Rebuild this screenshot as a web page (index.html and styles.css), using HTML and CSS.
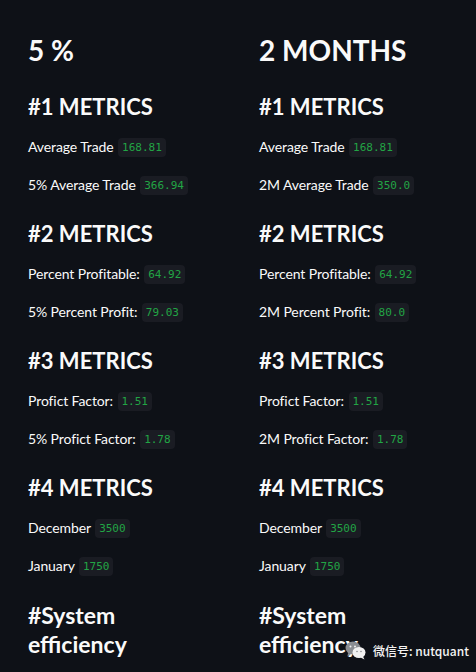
FILE: index.html
```html
<!DOCTYPE html>
<html>
<head>
<meta charset="utf-8">
<link rel="stylesheet" href="styles.css">
</head>
<body>
<div class="page">
  <div class="col">
    <h1 class="title">5 %</h1>
    <h2 class="sec">#1 METRICS</h2>
    <p class="row">Average Trade <code class="val">168.81</code></p>
    <p class="row">5% Average Trade <code class="val">366.94</code></p>
    <h2 class="sec">#2 METRICS</h2>
    <p class="row">Percent Profitable: <code class="val">64.92</code></p>
    <p class="row">5% Percent Profit: <code class="val">79.03</code></p>
    <h2 class="sec">#3 METRICS</h2>
    <p class="row">Profict Factor: <code class="val">1.51</code></p>
    <p class="row">5% Profict Factor: <code class="val">1.78</code></p>
    <h2 class="sec">#4 METRICS</h2>
    <p class="row">December <code class="val">3500</code></p>
    <p class="row">January <code class="val">1750</code></p>
    <h2 class="sec sys">#System efficiency</h2>
  </div>
  <div class="col">
    <h1 class="title">2 MONTHS</h1>
    <h2 class="sec">#1 METRICS</h2>
    <p class="row">Average Trade <code class="val">168.81</code></p>
    <p class="row">2M Average Trade <code class="val">350.0</code></p>
    <h2 class="sec">#2 METRICS</h2>
    <p class="row">Percent Profitable: <code class="val">64.92</code></p>
    <p class="row">2M Percent Profit: <code class="val">80.0</code></p>
    <h2 class="sec">#3 METRICS</h2>
    <p class="row">Profict Factor: <code class="val">1.51</code></p>
    <p class="row">2M Profict Factor: <code class="val">1.78</code></p>
    <h2 class="sec">#4 METRICS</h2>
    <p class="row">December <code class="val">3500</code></p>
    <p class="row">January <code class="val">1750</code></p>
    <h2 class="sec sys">#System efficiency</h2>
  </div>
</div>
<div class="wm">
  <svg class="wm-icon" width="22" height="20" viewBox="0 0 22 20">
    <ellipse cx="8" cy="8" rx="7.5" ry="6.5" fill="#8a8d92"/>
    <path d="M3 13 L2.5 16.5 L6 14 Z" fill="#8a8d92"/>
    <ellipse cx="14" cy="12.5" rx="6.5" ry="5.5" fill="#f2f2f2"/>
    <path d="M18 16.5 L19.5 19.5 L15.5 17.5 Z" fill="#f2f2f2"/>
    <circle cx="5.5" cy="6.5" r="1" fill="#f2f2f2"/>
    <circle cx="10" cy="6.5" r="1" fill="#f2f2f2"/>
    <circle cx="12" cy="11.5" r="0.8" fill="#8a8d92"/>
    <circle cx="16" cy="11.5" r="0.8" fill="#8a8d92"/>
  </svg>
  <span class="wm-text">微信号: nutquant</span>
</div>
</body>
</html>
```
FILE: styles.css
```css
html, body {
  margin: 0;
  padding: 0;
  background: #0e1117;
}
body {
  width: 476px;
  height: 672px;
  overflow: hidden;
  position: relative;
  font-family: "Lato", "Noto Sans", sans-serif;
  color: #fafafa;
}
.page {
  display: grid;
  grid-template-columns: 231px 231px;
  padding: 32px 0 0 28px;
}
.col {
  display: flex;
  flex-direction: column;
}
.title {
  margin: 0;
  font-size: 28px;
  line-height: 36px;
  font-weight: 700;
  height: 36px;
}
.sec {
  margin: 24px 0 0 0;
  font-size: 22px;
  line-height: 30px;
  font-weight: 700;
  height: 30px;
}
.col .row + .sec {
  margin-top: 20px;
}
.row {
  margin: 11px 0 0 0;
  font-size: 14px;
  letter-spacing: -0.1px;
  line-height: 28px;
  height: 28px;
  display: flex;
  align-items: center;
  white-space: pre;
}
.row + .row {
  margin-top: 10px;
}
.val {
  display: inline-block;
  margin-left: 1px;
  background: #1a1c23;
  color: #22a545;
  font-family: "DejaVu Sans Mono", monospace;
  font-size: 11px;
  letter-spacing: 0;
  line-height: 19px;
  padding: 0 4px;
  border-radius: 4px;
}
.col .row + .sys {
  height: auto;
  width: 130px;
  font-size: 23px;
  line-height: 29px;
  margin-top: 21px;
}
.wm {
  position: absolute;
  left: 345px;
  top: 640px;
  display: flex;
  align-items: center;
  gap: 6px;
}
.wm-text {
  font-family: "Noto Sans CJK SC", sans-serif;
  font-size: 12px;
  color: #f4f4f4;
  font-weight: 500;
}
```
